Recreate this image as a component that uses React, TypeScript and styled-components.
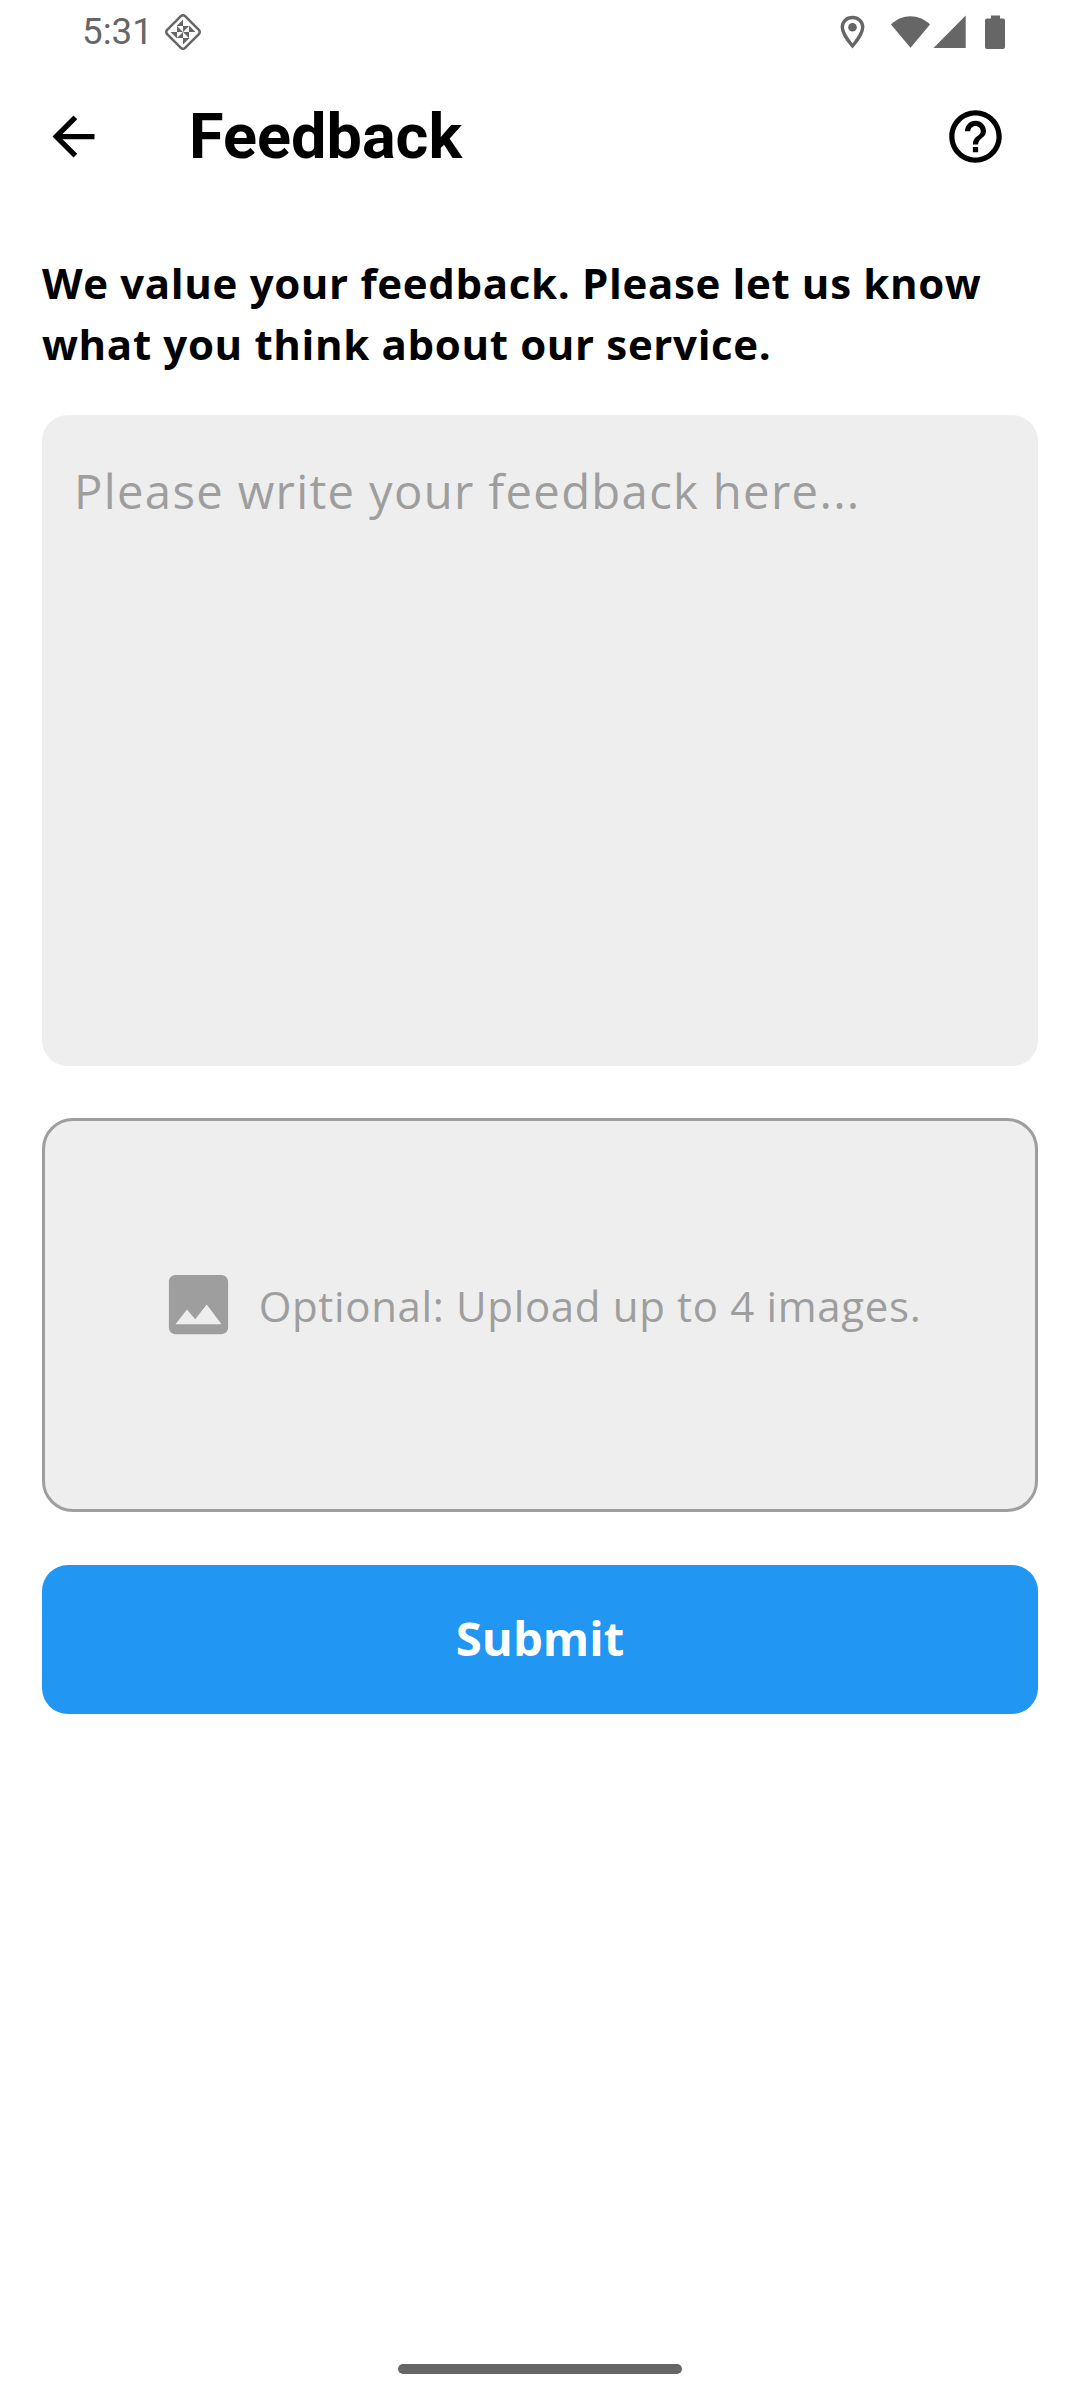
import React from "react";
import styled, { createGlobalStyle } from "styled-components";
import { MdArrowBack, MdHelpOutline, MdImage } from "react-icons/md";

const GlobalStyle = createGlobalStyle`
  *, *::before, *::after { box-sizing: border-box; }
  body { margin: 0; background: #fff; }
`;

const Screen = styled.div`
  display: flex;
  flex-direction: column;
  width: 1080px;
  height: 2400px;
  background: #fff;
  color: #000;
  font-family: "Open Sans", "Noto Sans", sans-serif;
`;

const StatusBar = styled.header`
  display: flex;
  align-items: center;
  justify-content: space-between;
  height: 63px;
  padding: 0 74px 0 82px;
  color: #666;
`;

const StatusGroup = styled.div`
  display: flex;
  align-items: center;
`;

const Clock = styled.span`
  width: 82px;
  font: 400 36.75px/63px Roboto, sans-serif;
`;

const AppBar = styled.nav`
  display: flex;
  align-items: center;
  height: 147px;
  padding: 0 73px 0 42px;
`;

const IconButton = styled.button`
  display: flex;
  padding: 0;
  border: 0;
  background: none;
  color: #000;
  font-size: 63px;
`;

const Title = styled.h1`
  flex: 1;
  margin: 0 0 0 84px;
  font: 700 63px/74px Roboto, sans-serif;
  letter-spacing: 0;
`;

const Content = styled.main`
  display: flex;
  flex: 1;
  flex-direction: column;
  padding: 42px 42px 0;
`;

const Prompt = styled.p`
  margin: 0 0 41px;
  font-size: 42px;
  font-weight: 700;
  line-height: 61px;
  letter-spacing: 0.656px;
`;

const FeedbackInput = styled.textarea`
  display: block;
  height: 651px;
  margin: 0 0 52px;
  padding: 44px 32px;
  border: 0;
  border-radius: 26px;
  outline: 0;
  resize: none;
  background: #eee;
  font: 400 47.25px/64px "Open Sans", "Noto Sans", sans-serif;
  letter-spacing: 1.3125px;

  &::placeholder {
    color: #9e9e9e;
    opacity: 1;
  }
`;

const UploadBox = styled.button`
  display: flex;
  align-items: center;
  justify-content: center;
  gap: 21px;
  height: 394px;
  margin: 0 0 53px;
  padding: 0 0 21px;
  border: 3px solid #9e9e9e;
  border-radius: 31px;
  background: #eee;
  color: #9e9e9e;
  font: 400 42px/61px "Open Sans", "Noto Sans", sans-serif;
  letter-spacing: 0.656px;
`;

const UploadIcon = styled(MdImage)`
  flex: none;
  width: 79px;
  height: 79px;
`;

const UploadLabel = styled.span`
  padding-top: 2px;
`;

const SubmitButton = styled.button`
  height: 149px;
  padding: 0 0 3px;
  border: 0;
  border-radius: 26px;
  background: #2196f3;
  color: #fff;
  font: 700 47.25px/68px "Open Sans", "Noto Sans", sans-serif;
  letter-spacing: 0;
`;

const NavigationBar = styled.footer`
  display: flex;
  justify-content: center;
  height: 36px;
`;

const HomeHandle = styled.div`
  width: 284px;
  height: 10px;
  border-radius: 5px;
  background: #666;
`;

const DiamondIcon = () => (
  <svg width="38" height="38" viewBox="0 0 38 38" fill="currentColor">
    <rect x="6.3" y="6.3" width="25.4" height="25.4" rx="3" transform="rotate(45 19 19)" fill="none" stroke="currentColor" strokeWidth="2.5" />
    {[0, 90, 180, 270].map((angle) => (
      <path key={angle} d="M12.500 13l6.500-6.500v6.500zM13 13l6 6h-6z" transform={`rotate(${angle} 19 19)`} />
    ))}
  </svg>
);

const SystemIcons = () => (
  <svg width="166" height="36" viewBox="0 0 166 36" fill="currentColor">
    <path d="M12.5 3.5C6.8 3.5 2.3 7.8 2.3 13.2 2.3 20 12.5 32 12.5 32S22.7 20 22.7 13.2C22.7 7.8 18.2 3.5 12.5 3.5z" fill="none" stroke="currentColor" strokeWidth="3.4" />
    <circle cx="12.5" cy="13.3" r="4.3" />
    <path d="M51 10.500C62 -.5 79 -.5 90 10.500L70.500 33.700z" />
    <path d="M125.700 1.500v32.500H93.500z" />
    <path d="M151 1.500h9v3h3a2 2 0 0 1 2 2V33a2 2 0 0 1-2 2h-16a2 2 0 0 1-2-2V6.500a2 2 0 0 1 2-2h4z" />
  </svg>
);

export default function App() {
  return (
    <>
      <GlobalStyle />
      <Screen>
        <StatusBar>
          <StatusGroup>
            <Clock>5:31</Clock>
            <DiamondIcon />
          </StatusGroup>
          <SystemIcons />
        </StatusBar>
        <AppBar>
          <IconButton aria-label="Back"><MdArrowBack /></IconButton>
          <Title>Feedback</Title>
          <IconButton aria-label="Help"><MdHelpOutline /></IconButton>
        </AppBar>
        <Content>
          <Prompt>We value your feedback. Please let us know what you think about our service.</Prompt>
          <FeedbackInput placeholder="Please write your feedback here..." />
          <UploadBox>
            <UploadIcon />
            <UploadLabel>Optional: Upload up to 4 images.</UploadLabel>
          </UploadBox>
          <SubmitButton>Submit</SubmitButton>
        </Content>
        <NavigationBar><HomeHandle /></NavigationBar>
      </Screen>
    </>
  );
}
